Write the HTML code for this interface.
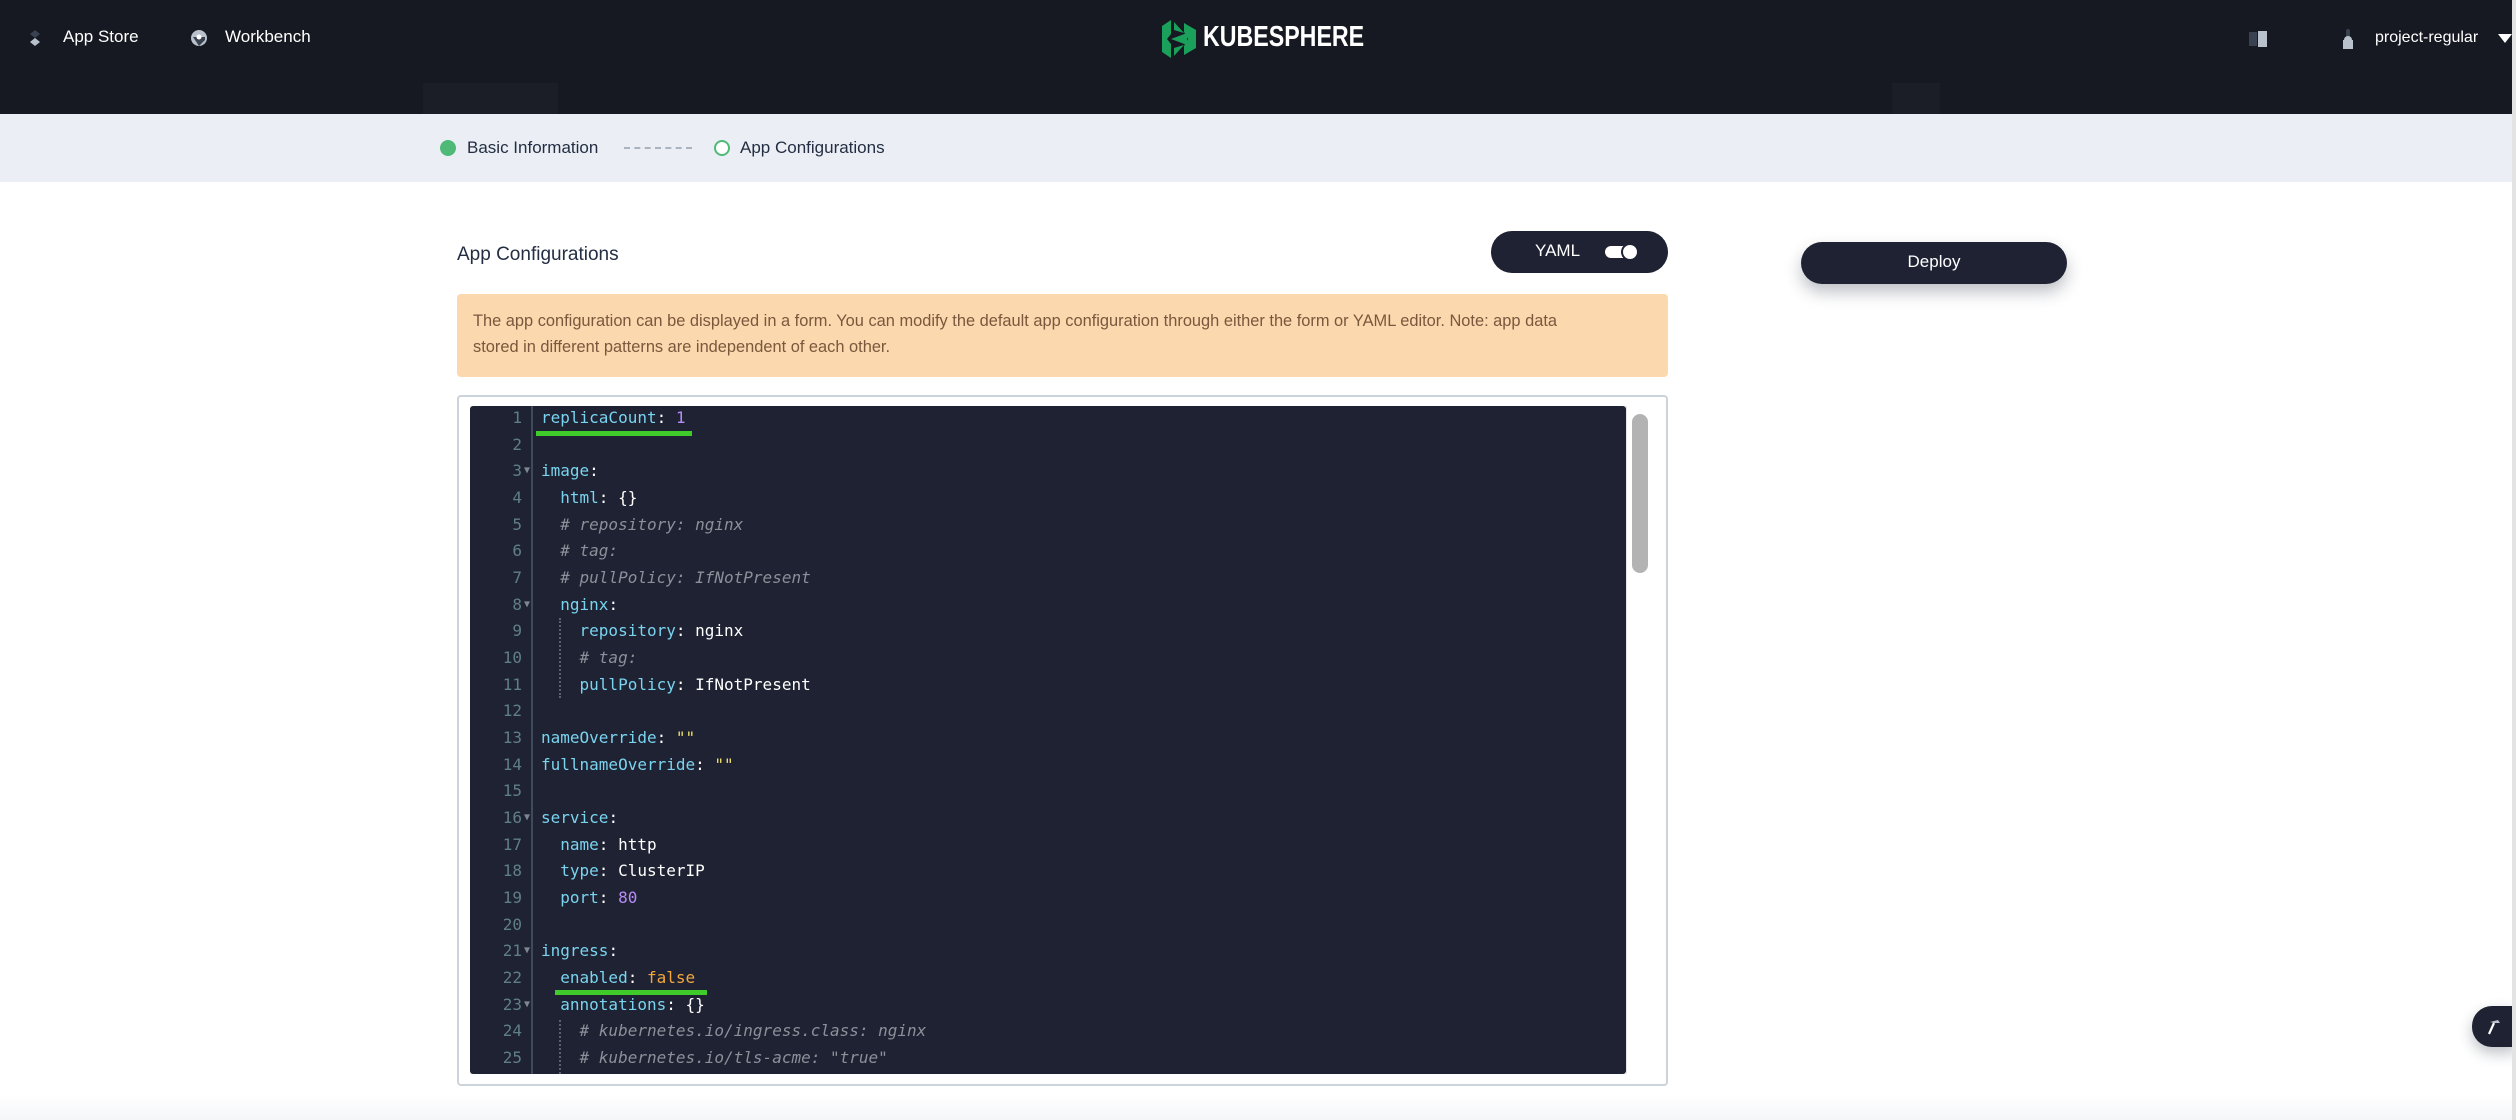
<!DOCTYPE html>
<html><head><meta charset="utf-8"><style>
*{margin:0;padding:0;box-sizing:border-box}
body{width:2516px;height:1120px;overflow:hidden;background:#fff;font-family:"Liberation Sans",sans-serif;position:relative}
.hdr{position:absolute;left:0;top:0;width:2512px;height:114px;background:#161922}
.hdr .t{position:absolute;top:27px;color:#fff;font-size:18px}
.steps{position:absolute;left:0;top:114px;width:2512px;height:68px;background:#ebeff5}
.rs{position:absolute;right:0;top:0;width:4px;height:1120px;background:#e3e3e3}
.ab{position:absolute}
.code{position:absolute;left:470px;top:406px;width:1156px;height:668px;background:#1e2232;border-radius:3px;overflow:hidden;font-family:"DejaVu Sans Mono",monospace;font-size:16px}
.ln{position:absolute;left:0;width:1156px;height:27px;line-height:27px}
.ln .n{position:absolute;right:1104px;color:#5f7f86;text-align:right}
.ln .c{position:absolute;left:71px;white-space:pre;color:#fff}
.k{color:#7ad4ef}.v{color:#fff}.num{color:#b88cf7}.cm{color:#8b909a;font-style:italic}.f{color:#f3a73a}.s{color:#f0e06a}
.arr{position:absolute;left:54px;color:#7d8890;font-size:10px}
</style></head><body>
<div class="hdr">
  <svg class="ab" style="left:28px;top:28px" width="14" height="20" viewBox="0 0 14 20"><path d="M7 2l5 4-5 4-5-4z" fill="#3a4150"/><path d="M7 10l5 4-5 4-5-4z" fill="#b9c2cc"/></svg>
  <span class="t" style="left:63px;font-size:17px">App Store</span>
  <svg class="ab" style="left:190px;top:29px" width="18" height="18" viewBox="0 0 18 18"><circle cx="9" cy="9" r="8" fill="#b9c2cc"/><path d="M3 8h12v3l-6 6z" fill="#3a4150"/><circle cx="9" cy="8" r="2.5" fill="#fff"/></svg>
  <span class="t" style="left:225px;font-size:17px">Workbench</span>
  <svg class="ab" style="left:1162px;top:20px" width="36" height="38" viewBox="0 0 36 38"><path d="M9 0L0 6v26l9 6V24l-4-5 4-5z" fill="#1aa05a"/><path d="M12 2v8l10 3zM12 36v-8l10-3zM9 19l16-6v12z" fill="#1aa05a"/><path d="M22 3l12 7v18l-12 7v-9l4-7-4-7z" fill="#1aa05a"/></svg>
  <span class="t" style="left:1203px;top:21px;font-size:29px;font-weight:bold;transform:scaleX(0.8);transform-origin:left">KUBESPHERE</span>
  <svg class="ab" style="left:2248px;top:30px" width="20" height="18" viewBox="0 0 20 18"><rect x="1" y="2" width="8" height="14" fill="#3a4150"/><rect x="10" y="1" width="9" height="16" fill="#b9c2cc"/></svg>
  <svg class="ab" style="left:2340px;top:28px" width="16" height="22" viewBox="0 0 16 22"><rect x="6" y="1" width="4" height="8" rx="2" fill="#3a4150"/><path d="M3 12h10v9H3z" fill="#b9c2cc"/><circle cx="8" cy="12" r="4" fill="#b9c2cc"/></svg>
  <span class="t" style="left:2375px;font-size:16px;top:29px">project-regular</span>
  <svg class="ab" style="left:2498px;top:34px" width="14" height="9" viewBox="0 0 14 9"><path d="M0 0h14L7 9z" fill="#fff"/></svg>
  <div class="ab" style="left:423px;top:83px;width:135px;height:31px;background:#1b1e27"></div>
  <div class="ab" style="left:1892px;top:83px;width:48px;height:31px;background:#1b1e27"></div>
</div>
<div class="steps">
  <div class="ab" style="left:440px;top:26px;width:16px;height:16px;border-radius:50%;background:#4fba78"></div>
  <span class="ab" style="left:467px;top:24px;font-size:17px;color:#242e42">Basic Information</span>
  <div class="ab" style="left:624px;top:33px;width:68px;border-top:2px dashed #abb3bf"></div>
  <div class="ab" style="left:714px;top:26px;width:16px;height:16px;border-radius:50%;border:2px solid #4fba78;background:#fff"></div>
  <span class="ab" style="left:740px;top:24px;font-size:17px;color:#242e42">App Configurations</span>
</div>
<span class="ab" style="left:457px;top:244px;font-size:19px;color:#242e42">App Configurations</span>
<div class="ab" style="left:1491px;top:231px;width:177px;height:42px;border-radius:21px;background:#1e2232"></div>
<span class="ab" style="left:1535px;top:241px;font-size:17px;color:#fff">YAML</span>
<div class="ab" style="left:1605px;top:246px;width:32px;height:12px;border-radius:6px;background:#fff"></div>
<div class="ab" style="left:1621px;top:243px;width:18px;height:18px;border-radius:50%;background:#fff;border:2px solid #1e2232"></div>
<div class="ab" style="left:1801px;top:242px;width:266px;height:42px;border-radius:21px;background:#1e2232;box-shadow:0 8px 16px rgba(35,45,65,.3)"></div>
<span class="ab" style="left:1801px;top:252px;width:266px;text-align:center;font-size:17px;color:#fff">Deploy</span>
<div class="ab" style="left:457px;top:294px;width:1211px;height:83px;border-radius:4px;background:#fcd8ae;padding:14px 16px 0;font-size:16.4px;line-height:26px;color:#79583d">The app configuration can be displayed in a form. You can modify the default app configuration through either the form or YAML editor. Note: app data<br>stored in different patterns are independent of each other.</div>
<div class="ab" style="left:457px;top:395px;width:1211px;height:691px;border:2px solid #ccd3db;border-radius:4px;background:#fff"></div>
<div class="code">
  <div class="ab" style="left:61px;top:0;width:2px;height:668px;background:#3f4a5a"></div>
<div class="ln" style="top:-2px"><span class="n">1</span><span class="c"><span class="k">replicaCount</span>: <span class="num">1</span></span></div>
<div class="ln" style="top:24.7px"><span class="n">2</span></div>
<div class="ln" style="top:51.3px"><span class="n">3</span><span class="arr">▼</span><span class="c"><span class="k">image</span>:</span></div>
<div class="ln" style="top:78px"><span class="n">4</span><span class="c">  <span class="k">html</span>: {}</span></div>
<div class="ln" style="top:104.7px"><span class="n">5</span><span class="c">  <span class="cm"># repository: nginx</span></span></div>
<div class="ln" style="top:131.3px"><span class="n">6</span><span class="c">  <span class="cm"># tag:</span></span></div>
<div class="ln" style="top:158px"><span class="n">7</span><span class="c">  <span class="cm"># pullPolicy: IfNotPresent</span></span></div>
<div class="ln" style="top:184.7px"><span class="n">8</span><span class="arr">▼</span><span class="c">  <span class="k">nginx</span>:</span></div>
<div class="ln" style="top:211.3px"><span class="n">9</span><span class="c">    <span class="k">repository</span>: nginx</span></div>
<div class="ln" style="top:238px"><span class="n">10</span><span class="c">    <span class="cm"># tag:</span></span></div>
<div class="ln" style="top:264.7px"><span class="n">11</span><span class="c">    <span class="k">pullPolicy</span>: IfNotPresent</span></div>
<div class="ln" style="top:291.3px"><span class="n">12</span></div>
<div class="ln" style="top:318px"><span class="n">13</span><span class="c"><span class="k">nameOverride</span>: <span class="s">""</span></span></div>
<div class="ln" style="top:344.7px"><span class="n">14</span><span class="c"><span class="k">fullnameOverride</span>: <span class="s">""</span></span></div>
<div class="ln" style="top:371.3px"><span class="n">15</span></div>
<div class="ln" style="top:398px"><span class="n">16</span><span class="arr">▼</span><span class="c"><span class="k">service</span>:</span></div>
<div class="ln" style="top:424.7px"><span class="n">17</span><span class="c">  <span class="k">name</span>: http</span></div>
<div class="ln" style="top:451.3px"><span class="n">18</span><span class="c">  <span class="k">type</span>: ClusterIP</span></div>
<div class="ln" style="top:478px"><span class="n">19</span><span class="c">  <span class="k">port</span>: <span class="num">80</span></span></div>
<div class="ln" style="top:504.7px"><span class="n">20</span></div>
<div class="ln" style="top:531.3px"><span class="n">21</span><span class="arr">▼</span><span class="c"><span class="k">ingress</span>:</span></div>
<div class="ln" style="top:558px"><span class="n">22</span><span class="c">  <span class="k">enabled</span>: <span class="f">false</span></span></div>
<div class="ln" style="top:584.7px"><span class="n">23</span><span class="arr">▼</span><span class="c">  <span class="k">annotations</span>: {}</span></div>
<div class="ln" style="top:611.3px"><span class="n">24</span><span class="c">    <span class="cm"># kubernetes.io/ingress.class: nginx</span></span></div>
<div class="ln" style="top:638px"><span class="n">25</span><span class="c">    <span class="cm"># kubernetes.io/tls-acme: "true"</span></span></div>
  <div class="ab" style="left:89px;top:212px;height:80px;border-left:2px dotted #5a6270"></div>
  <div class="ab" style="left:89px;top:614px;height:54px;border-left:2px dotted #5a6270"></div>
  <div class="ab" style="left:66px;top:25px;width:156px;height:5px;background:#3fcb2a"></div>
  <div class="ab" style="left:85px;top:584px;width:152px;height:5px;background:#3fcb2a"></div>
</div>
<div class="ab" style="left:1626px;top:406px;width:27px;height:668px;background:#fff;border-left:1px solid #e5e5e5"></div>
<div class="ab" style="left:1632px;top:414px;width:16px;height:159px;border-radius:8px;background:#b3b3b3"></div>
<div class="ab" style="left:0;top:1095px;width:2512px;height:25px;background:linear-gradient(#fff,#f5f6f8)"></div>
<div class="ab" style="left:2472px;top:1006px;width:44px;height:41px;border-radius:20px 0 0 20px;background:#1e2232;box-shadow:0 6px 14px rgba(35,45,65,.3)"></div>
<svg class="ab" style="left:2486px;top:1018px" width="16" height="18" viewBox="0 0 16 18"><path d="M4 4l8-2 2 3-6 0z" fill="#b9c2cc"/><path d="M8 5L3 16" stroke="#fff" stroke-width="2.2"/></svg>
<div class="rs"></div>
</body></html>
